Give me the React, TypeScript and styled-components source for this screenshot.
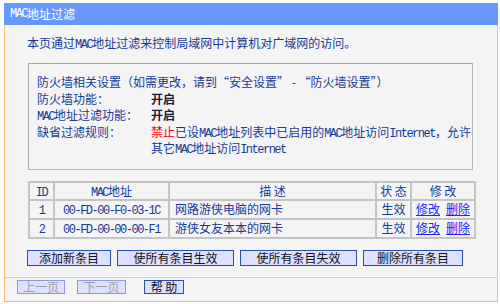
import styled, { createGlobalStyle } from "styled-components";

const GlobalStyle = createGlobalStyle`
  body {
    margin: 0;
    background: #ffffff;
    font-family: "Noto Sans CJK SC", sans-serif;
    font-size: 12px;
    line-height: 16px;
    color: #163a96;
  }
`;

const Frame = styled.div`
  width: 494px;
  margin: 3px 0 0 4px;
`;

const TitleBar = styled.div`
  height: 22px;
  display: flex;
  align-items: center;
  padding-left: 6px;
  background: #6699ff;
  color: #ffffff;
`;

const Panel = styled.div`
  background: #f4f4f4;
  border: 1px solid #ffb870;
  border-top: none;
`;

const Body = styled.div`
  padding: 10px 22px 11px 23px;
`;

const Intro = styled.div`
  height: 16px;
  margin-left: -1px;
`;

const InfoBox = styled.div`
  width: 445px;
  box-sizing: border-box;
  margin-top: 12px;
  padding: 10px 2px 12px 8px;
  border: 1px solid #a8a8a8;
  border-right-color: #b8b8b8;
  border-bottom-color: #b8b8b8;
  display: grid;
  grid-template-columns: 114px 1fr;
  grid-auto-rows: 16.5px;
  line-height: 16.5px;
  white-space: nowrap;
`;

const Wide = styled.div`
  grid-column: 1 / 3;
`;

const Value = styled.div<{ $bold?: boolean }>`
  font-weight: ${(p) => (p.$bold ? 700 : 400)};
  color: ${(p) => (p.$bold ? "#1a1a3a" : "inherit")};
`;

const Red = styled.span`
  color: #ff0000;
`;

const Lat = styled.span`
  font-family: "Liberation Mono", monospace;
  font-size: 12px;
  line-height: 1;
  letter-spacing: -1.5px;
`;

const Table = styled.table`
  width: 446px;
  margin-top: 11px;
  border-collapse: collapse;
  border: 1px solid #a8a8a8;
  table-layout: fixed;
  line-height: 16px;

  th,
  td {
    border: 2px solid #c4c4c4;
    padding: 0;
    height: 17px;
    font-weight: 400;
    text-align: center;
    white-space: nowrap;
  }

  th {
    height: 16px;
  }
`;

const Desc = styled.td`
  && {
    text-align: left;
    padding-left: 5px;
  }
`;

const Link = styled.a`
  color: #2222ff;
  text-decoration: underline;
  margin: 0 3px;
`;

const ButtonRow = styled.div`
  display: flex;
  gap: 6px;
  margin-top: 11px;
  margin-left: -1px;
`;

const Button = styled.button<{ $w: number; $disabled?: boolean }>`
  width: ${(p) => p.$w}px;
  height: 16px;
  padding: 0;
  box-sizing: border-box;
  background: #dde0ff;
  border: 1px solid ${(p) => (p.$disabled ? "#8a9ae0" : "#2a4fa8")};
  font-family: "Noto Sans CJK SC", sans-serif;
  font-size: 12px;
  line-height: 14px;
  color: ${(p) => (p.$disabled ? "#a0a0a8" : "#111111")};
`;

const Footer = styled.div`
  border-top: 1px solid #ffc488;
  display: flex;
  align-items: flex-start;
  padding: 2px 12px 7px;
  height: 14px;
`;

const SmallButton = styled(Button)<{ $ml?: number }>`
  height: 14px;
  line-height: 12px;
  margin-left: ${(p) => p.$ml ?? 0}px;
`;

const rows = [
  { id: 1, mac: "00-FD-00-F0-03-1C", desc: "网路游侠电脑的网卡" },
  { id: 2, mac: "00-FD-00-00-00-F1", desc: "游侠女友本本的网卡" },
];

export default function App() {
  return (
    <>
      <GlobalStyle />
      <Frame>
        <TitleBar>
          <Lat>MAC</Lat>地址过滤
        </TitleBar>
        <Panel>
          <Body>
            <Intro>
              本页通过<Lat>MAC</Lat>地址过滤来控制局域网中计算机对广域网的访问。
            </Intro>
            <InfoBox>
              <Wide>防火墙相关设置（如需更改，请到“安全设置” - “防火墙设置”）</Wide>
              <div>防火墙功能：</div>
              <Value $bold>开启</Value>
              <div>
                <Lat>MAC</Lat>地址过滤功能：
              </div>
              <Value $bold>开启</Value>
              <div>缺省过滤规则：</div>
              <Value>
                <Red>禁止</Red>已设<Lat>MAC</Lat>地址列表中已启用的<Lat>MAC</Lat>地址访问<Lat>Internet</Lat>，允许
              </Value>
              <div />
              <Value>
                其它<Lat>MAC</Lat>地址访问<Lat>Internet</Lat>
              </Value>
            </InfoBox>
            <Table>
              <colgroup>
                <col style={{ width: 25 }} />
                <col style={{ width: 115 }} />
                <col style={{ width: 207 }} />
                <col style={{ width: 35 }} />
                <col style={{ width: 64 }} />
              </colgroup>
              <thead>
                <tr>
                  <th>
                    <Lat>ID</Lat>
                  </th>
                  <th>
                    <Lat>MAC</Lat>地址
                  </th>
                  <th>描 述</th>
                  <th>状 态</th>
                  <th>修 改</th>
                </tr>
              </thead>
              <tbody>
                {rows.map((r) => (
                  <tr key={r.id}>
                    <td>
                      <Lat>{r.id}</Lat>
                    </td>
                    <td>
                      <Lat>{r.mac}</Lat>
                    </td>
                    <Desc>{r.desc}</Desc>
                    <td>生效</td>
                    <td>
                      <Link>修改</Link>
                      <Link>删除</Link>
                    </td>
                  </tr>
                ))}
              </tbody>
            </Table>
            <ButtonRow>
              <Button $w={84}>添加新条目</Button>
              <Button $w={117}>使所有条目生效</Button>
              <Button $w={117}>使所有条目失效</Button>
              <Button $w={100}>删除所有条目</Button>
            </ButtonRow>
          </Body>
          <Footer>
            <SmallButton $w={48} $disabled>
              上一页
            </SmallButton>
            <SmallButton $w={49} $disabled $ml={12}>
              下一页
            </SmallButton>
            <SmallButton $w={40} $ml={18}>
              帮 助
            </SmallButton>
          </Footer>
        </Panel>
      </Frame>
    </>
  );
}
